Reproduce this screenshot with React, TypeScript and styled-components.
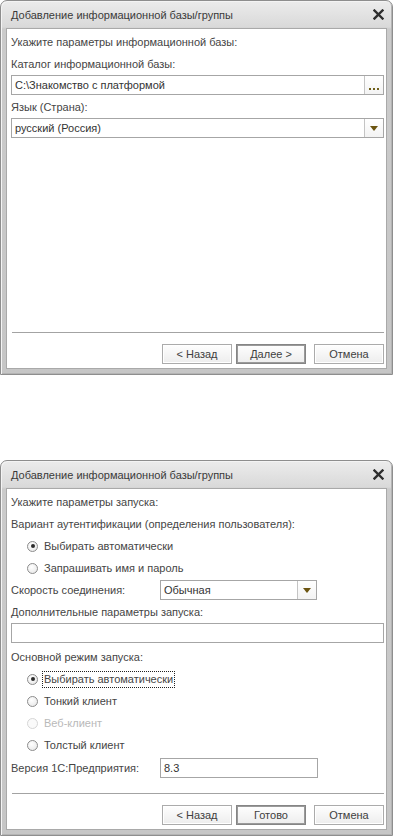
import React from 'react';
import styled, { createGlobalStyle } from 'styled-components';

const GlobalStyle = createGlobalStyle`
  body {
    margin: 0;
    background: #ffffff;
    font-family: "Liberation Sans", Arial, sans-serif;
    font-size: 11px;
    color: #454545;
  }
`;

const Page = styled.div`
  display: flex;
  flex-direction: column;
  gap: 85px;
  width: 395px;
`;

const Frame = styled.div<{ $h: number }>`
  box-sizing: border-box;
  width: 393px;
  height: ${(p) => p.$h}px;
  display: flex;
  flex-direction: column;
  padding: 0 5px 5px;
  border: 1px solid #8e8e8e;
  border-radius: 7px 7px 0 0;
  background: linear-gradient(#ececec, #d9d9d9 26px, #cbcbcb 28px, #c6c6c6);
  box-shadow: inset 1px 1px 0 #f4f4f4, inset -1px -1px 0 #b4b4b4;
`;

const TitleBar = styled.div`
  height: 27px;
  display: flex;
  align-items: center;
  justify-content: space-between;
  padding: 0 3px 0 5px;
  color: #3a3a3a;
  font-size: 11px;
`;

const CloseIcon = () => (
  <svg width="11" height="11" viewBox="0 0 11 11">
    <path d="M1.5 1.5 L9.5 9.5 M9.5 1.5 L1.5 9.5" stroke="#2e2e2e" strokeWidth="2.4" strokeLinecap="square" />
  </svg>
);

const Body = styled.div`
  flex: 1;
  display: flex;
  flex-direction: column;
  background: #ffffff;
  border: 1px solid #a9a9a9;
  padding: 2px 2px 4px 4px;
`;

const Label = styled.div`
  height: 22px;
  line-height: 22px;
  white-space: nowrap;
`;

const Field = styled.div<{ $w?: number; $gap?: number }>`
  box-sizing: border-box;
  height: 20px;
  ${(p) => (p.$w ? `width: ${p.$w}px;` : '')}
  margin-bottom: ${(p) => p.$gap ?? 1}px;
  display: flex;
  align-items: stretch;
  border: 1px solid #a6a6a6;
  background: #ffffff;
  color: #333333;
`;

const FieldText = styled.div`
  flex: 1;
  padding-left: 3px;
  line-height: 18px;
  white-space: nowrap;
  overflow: hidden;
`;

const FieldButton = styled.div`
  width: 18px;
  display: flex;
  align-items: center;
  justify-content: center;
  border-left: 1px solid #c4c4c4;
  background: linear-gradient(#ffffff, #f3f3f3);
`;

const Dots = styled.div`
  display: flex;
  gap: 2px;
  margin-top: 8px;
  & > span {
    width: 2px;
    height: 2px;
    background: #6f5f18;
  }
`;

const Arrow = styled.div`
  width: 0;
  height: 0;
  border-left: 4px solid transparent;
  border-right: 4px solid transparent;
  border-top: 5px solid #6b5410;
`;

const InlineRow = styled.div<{ $mt?: number }>`
  height: 22px;
  margin-top: ${(p) => p.$mt ?? 0}px;
  display: flex;
  align-items: center;
  & > ${Field} {
    margin-bottom: 0;
  }
`;

const InlineLabel = styled.div`
  width: 149px;
  white-space: nowrap;
`;

const RadioRow = styled.div<{ $disabled?: boolean }>`
  height: 22px;
  display: flex;
  align-items: center;
  padding-left: 16px;
  gap: 4px;
  color: ${(p) => (p.$disabled ? '#b9b9b9' : '#454545')};
`;

const RadioCircle = styled.span<{ $checked?: boolean; $disabled?: boolean }>`
  box-sizing: border-box;
  width: 11px;
  height: 11px;
  border-radius: 50%;
  border: 1px solid ${(p) => (p.$disabled ? '#d6d6d6' : '#8c8c8c')};
  background: ${(p) => (p.$disabled ? '#fafafa' : 'radial-gradient(circle at 40% 35%, #ffffff, #e4e4e4)')};
  display: flex;
  align-items: center;
  justify-content: center;
  &::after {
    content: '';
    width: 4px;
    height: 4px;
    border-radius: 50%;
    background: ${(p) => (p.$checked ? '#2c2c2c' : 'transparent')};
  }
`;

const RadioText = styled.span<{ $focused?: boolean }>`
  padding: 0 1px;
  line-height: 15px;
  border: 1px dotted ${(p) => (p.$focused ? '#222' : 'transparent')};
  color: inherit;
`;

const Footer = styled.div`
  margin-top: auto;
  display: flex;
  flex-direction: column;
`;

const Separator = styled.div`
  height: 1px;
  margin: 0 0 11px 1px;
  background: #a3a3a3;
`;

const ButtonRow = styled.div`
  display: flex;
  justify-content: flex-end;
  gap: 4px;
`;

const Button = styled.div<{ $primary?: boolean; $spaced?: boolean }>`
  box-sizing: border-box;
  width: 70px;
  height: 20px;
  margin-left: ${(p) => (p.$spaced ? 4 : 0)}px;
  display: flex;
  align-items: center;
  justify-content: center;
  border: 1px solid ${(p) => (p.$primary ? '#858585' : '#ababab')};
  box-shadow: ${(p) => (p.$primary ? 'inset 0 0 0 1px #9a9a9a' : 'inset 0 0 0 1px #ffffff')};
  background: linear-gradient(#fefefe, #ededed);
  color: #404040;
`;

const SelectArrow = () => (
  <FieldButton>
    <Arrow />
  </FieldButton>
);

const Dialog: React.FC<{ h: number; children: React.ReactNode; next: string }> = ({ h, children, next }) => (
  <Frame $h={h}>
    <TitleBar>
      <span>Добавление информационной базы/группы</span>
      <CloseIcon />
    </TitleBar>
    <Body>
      {children}
      <Footer>
        <Separator />
        <ButtonRow>
          <Button>&lt; Назад</Button>
          <Button $primary>{next}</Button>
          <Button $spaced>Отмена</Button>
        </ButtonRow>
      </Footer>
    </Body>
  </Frame>
);

const App: React.FC = () => {
  return (
    <>
      <GlobalStyle />
      <Page>
        <Dialog h={375} next="Далее >">
          <Label>Укажите параметры информационной базы:</Label>
          <Label>Каталог информационной базы:</Label>
          <Field>
            <FieldText>C:\Знакомство с платформой</FieldText>
            <FieldButton>
              <Dots>
                <span />
                <span />
                <span />
              </Dots>
            </FieldButton>
          </Field>
          <Label>Язык (Страна):</Label>
          <Field>
            <FieldText>русский (Россия)</FieldText>
            <SelectArrow />
          </Field>
        </Dialog>

        <Dialog h={376} next="Готово">
          <Label>Укажите параметры запуска:</Label>
          <Label>Вариант аутентификации (определения пользователя):</Label>
          <RadioRow>
            <RadioCircle $checked />
            <RadioText>Выбирать автоматически</RadioText>
          </RadioRow>
          <RadioRow>
            <RadioCircle />
            <RadioText>Запрашивать имя и пароль</RadioText>
          </RadioRow>
          <InlineRow>
            <InlineLabel>Скорость соединения:</InlineLabel>
            <Field $w={157}>
              <FieldText>Обычная</FieldText>
              <SelectArrow />
            </Field>
          </InlineRow>
          <Label>Дополнительные параметры запуска:</Label>
          <Field $gap={3}>
            <FieldText />
          </Field>
          <Label>Основной режим запуска:</Label>
          <RadioRow>
            <RadioCircle $checked />
            <RadioText $focused>Выбирать автоматически</RadioText>
          </RadioRow>
          <RadioRow>
            <RadioCircle />
            <RadioText>Тонкий клиент</RadioText>
          </RadioRow>
          <RadioRow $disabled>
            <RadioCircle $disabled />
            <RadioText>Веб-клиент</RadioText>
          </RadioRow>
          <RadioRow>
            <RadioCircle />
            <RadioText>Толстый клиент</RadioText>
          </RadioRow>
          <InlineRow $mt={1}>
            <InlineLabel>Версия 1С:Предприятия:</InlineLabel>
            <Field $w={158}>
              <FieldText>8.3</FieldText>
            </Field>
          </InlineRow>
        </Dialog>
      </Page>
    </>
  );
};

export default App;
